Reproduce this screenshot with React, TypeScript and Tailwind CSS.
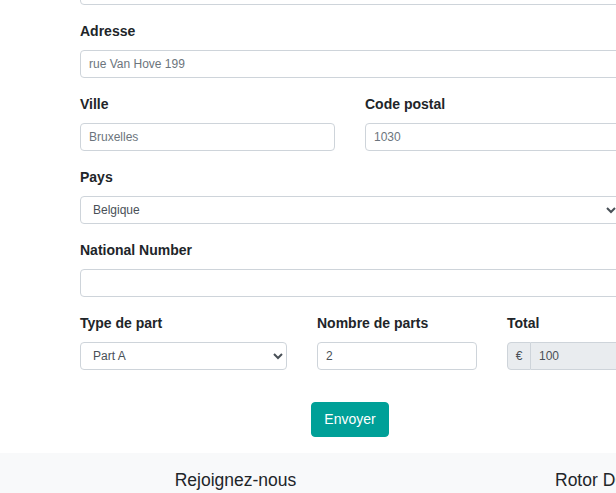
import React from "react";

const inputCls =
  "block w-full h-7 rounded border border-[#ced4da] bg-white px-2 text-xs text-[#495057] placeholder:text-[#6c757d] outline-none";
const labelCls = "block pt-px text-sm font-bold leading-[21px] text-[#212529] mb-[8px]";

function Field({ label, children }: { label: string; children: React.ReactNode }) {
  return (
    <div className="mb-[15px]">
      <label className={labelCls}>{label}</label>
      {children}
    </div>
  );
}

export default function App() {
  return (
    <div
      className="w-[616px] h-[493px] overflow-hidden bg-white"
      style={{ fontFamily: '"Liberation Sans", Arial, sans-serif' }}
    >
      <div className="w-[540px] ml-[80px]">
        <div className="-mt-[23px] mb-[15px]">
          <input className={inputCls} type="text" />
        </div>

        <Field label="Adresse">
          <input className={inputCls} placeholder="rue Van Hove 199" />
        </Field>

        <div className="grid grid-cols-2 gap-[30px]">
          <Field label="Ville">
            <input className={inputCls} placeholder="Bruxelles" />
          </Field>
          <Field label="Code postal">
            <input className={inputCls} placeholder="1030" />
          </Field>
        </div>

        <Field label="Pays">
          <select className={inputCls} defaultValue="BE">
            <option value="BE">Belgique</option>
            <option value="FR">France</option>
            <option value="NL">Nederland</option>
          </select>
        </Field>

        <Field label="National Number">
          <input className={inputCls} />
        </Field>

        <div className="grid grid-cols-[207px_160px_1fr] gap-[30px]">
          <Field label="Type de part">
            <select className={inputCls} defaultValue="A">
              <option value="A">Part A</option>
              <option value="B">Part B</option>
            </select>
          </Field>
          <Field label="Nombre de parts">
            <input className={inputCls} defaultValue="2" />
          </Field>
          <Field label="Total">
            <div className="flex h-7">
              <span className="flex items-center justify-center w-6 shrink-0 rounded-l border border-[#ced4da] bg-[#e9ecef] text-xs text-[#495057]">
                €
              </span>
              <input
                readOnly
                defaultValue="100"
                className="block w-full h-7 rounded-r border border-l-0 border-[#ced4da] bg-[#e9ecef] px-2 text-xs text-[#495057] outline-none"
              />
            </div>
          </Field>
        </div>

        <div className="flex justify-center mt-[17px]">
          <button className="rounded border border-[#00a098] bg-[#00a098] px-3 py-1.5 text-sm leading-[21px] text-white">
            Envoyer
          </button>
        </div>
      </div>

      <footer className="mt-4 bg-[#f8f9fa] pt-[14px] pb-6 flex text-[17.5px] leading-[27px] text-[#212529]">
        <div className="w-[471px] shrink-0 text-center">Rejoignez-nous</div>
        <div className="pl-[84px] shrink-0 whitespace-nowrap">Rotor DC</div>
      </footer>
    </div>
  );
}
